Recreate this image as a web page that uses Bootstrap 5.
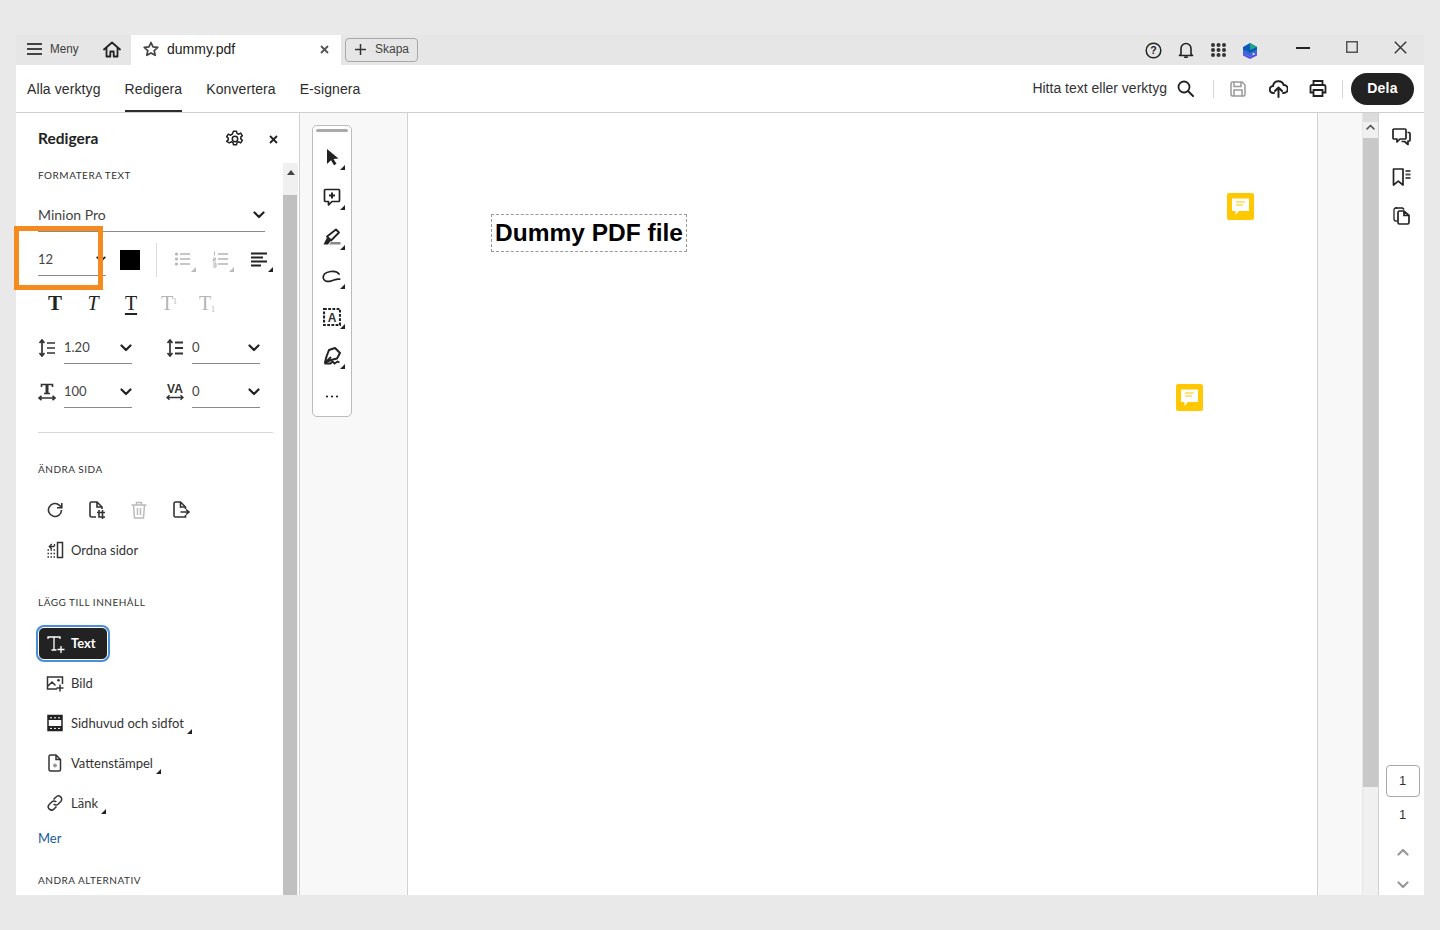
<!DOCTYPE html>
<html lang="sv">
<head>
<meta charset="utf-8">
<title>dummy.pdf</title>
<link href="https://cdn.jsdelivr.net/npm/bootstrap@5.3.0/dist/css/bootstrap.min.css" rel="stylesheet">
<style>
html,body{height:100%;overflow:hidden}
body{background:#e9e9e9;font-family:"Liberation Sans",Arial,sans-serif;color:#2c2c2c;padding:35px 16px}
svg{display:block;flex:none}
.sprite{position:absolute;width:0;height:0}
.app-win{height:860px;background:#fff}
.tabbar{height:30px;background:#e6e6e6;flex:none}
.menu-zone{width:115px;padding:0 0 2px 11px}
.menu-txt{font-size:12px;color:#3c3c3c;margin-left:8px;width:53px;transform:scaleX(.97);transform-origin:left}
.file-tab{width:210px;height:30px;background:#fff;padding:0 12px 2px;font-size:14px}
.file-name{margin-left:8px;color:#222}
.make-btn{width:73px;height:24px;margin:0 0 1px 4px;border:1px solid #a8a8a8;border-radius:4px;font-size:12px;color:#444;padding:0 0 1px 8px;gap:8px;background:#e6e6e6}
.toolbar{height:48px;border-bottom:1px solid #cfcfcf;flex:none;padding:0 10px 0 11px;font-size:14px}
.tool-tab{height:47px;margin-right:24px;color:#2c2c2c;text-decoration:none;display:flex;align-items:center;padding-top:1px;border-bottom:2px solid transparent;border-top:2px solid transparent;letter-spacing:.1px}
.tool-tab.is-on{border-bottom-color:#2c2c2c}
.find-txt{color:#333}
.vsep{width:1px;height:18px;background:#d5d5d5}
.share-btn{width:63px;height:32px;border-radius:16px;background:#222;color:#fff;font-weight:700;font-size:14px;border:0;padding:0;letter-spacing:.2px}
.workspace{flex:1;min-height:0}
.side-panel{width:284px;flex:none;border-right:1px solid #d2d2d2;font-family:Lato,"Noto Sans",sans-serif;color:#2c2c2c}
.side-head{height:50px;padding:2px 21px 0 22px;flex:none}
.side-title{font-size:15.5px;font-weight:700;flex:1;color:#222}
.side-body{flex:1;min-height:0}
.side-scroll{width:15px;flex:none;margin-right:1px;background:#f0f0f0}
.side-arrow{height:32px;padding-top:7px}
.side-thumb{flex:1;background:#c0c0c0;margin-right:1px}
.side-col{flex:1;padding-left:22px;min-width:0;position:relative}
.sect-name{height:24px;font-size:10px;letter-spacing:.5px;color:#333;display:flex;align-items:center;text-transform:uppercase}
.font-pick{height:33px;margin-top:12px;width:227px;border-bottom:1px solid #8a8a8a;font-size:14px;color:#444;padding:0 0 1px}
.size-row{height:44px}
.size-pick{width:68px;height:44px;border-bottom:1px solid #8a8a8a;font-size:13px;color:#444;padding-top:12px}
.swatch{width:20px;height:20px;background:#000;margin-left:14px;margin-top:12px}
.size-sep{width:1px;height:34px;background:#dcdcdc;margin:12px 0 0 16px}
.list-ic{position:relative;width:20px;height:20px;margin-top:12px}
.ic-dim{color:#b4b4b4}
.ic-dark{color:#222}
.tri{position:absolute;width:0;height:0;border-style:solid;border-width:0 0 5px 5px;border-color:transparent transparent #222 transparent;right:-3px;bottom:-2px}
.tri.is-dim{border-bottom-color:#bbb}
.style-row{height:32px;margin-top:11px}
.t-btn{width:38px;text-align:center;font-family:"Liberation Serif",serif;font-size:20px;line-height:32px;color:#222;position:relative;left:-2px}
.t-btn.is-dim{color:#b4b4b4}
.t-btn sup{font-size:8px;top:-.8em;position:relative;vertical-align:baseline}
.t-btn sub{font-size:8px;position:relative;vertical-align:baseline;top:.2em}
.t-bold{font-weight:700;font-size:21px}
.t-ital{font-style:italic}
.t-under{text-decoration:underline;text-underline-offset:3px}
.metric-row{height:32px;margin-bottom:12px}
.metric-row.first{margin-top:13px}
.metric{width:94px;margin-right:34px;height:32px}
.metric-ic{width:26px;flex:none}
.metric-val{width:68px;height:32px;border-bottom:1px solid #8a8a8a;font-size:13px;color:#444}
.side-rule{height:1px;background:#d8d8d8;width:235px;margin-top:24px}
.mt-sect{margin-top:24px}
.page-ics{height:40px;margin-top:9px;padding-left:8px;gap:24px}
.page-ics svg{width:18px;height:18px}
.act-row{height:40px;padding-left:8px;font-size:13px;color:#333;position:relative}
.act-row .act-ic{width:25px;flex:none}
.act-txt{padding-top:1px}
.act-lab{position:relative;padding:1px 3px 0 0}
.act-lab .tri{right:-5px;bottom:-1px}
.add-sect{margin-top:20px}
.text-act{width:70px;height:33px;margin-top:13px;background:#222;color:#fff;border-radius:6px;border:1px solid #fff;font-size:13px;font-weight:700;padding:0 0 0 8px;gap:6px;box-shadow:0 0 0 2px #4a8fd8}
.after-text{margin-top:3px}
.more-link{height:24px;margin-top:3px;font-size:13px;color:#1a5a9e;display:flex;align-items:center;text-decoration:none;padding-top:1px}
.last-sect{margin-top:18px}
.tool-rail{width:108px;flex:none;background:#f8f8f8;border-right:1px solid #d2d2d2;padding:12px 0 0 12px}
.tool-box{width:40px;height:292px;background:#fff;border:1px solid #bcbcbc;border-radius:5px;padding-top:3px}
.tool-handle{width:32px;height:3px;background:#aaa;border-radius:2px;margin:0 auto 5px}
.tool-slot{height:40px;position:relative}
.tool-slot .tri{right:6px;bottom:7px}
.lasso-ic{margin-top:4px}
.frame-ic{margin-top:2px}
.doc-page{flex:1;position:relative;background:#fff;min-width:0}
.doc-title{position:absolute;left:83px;top:101px;width:196px;height:38px;border:1px dashed #999;font-size:24.5px;font-weight:700;color:#000;display:flex;align-items:center;justify-content:center;white-space:nowrap}
.note-mark{position:absolute;width:27px;height:27px;background:#ffc800;border-radius:2px}
.note-a{left:819px;top:80px}
.note-b{left:768px;top:271px}
.doc-gutter{width:61px;flex:none;background:#f8f8f8;border-left:1px solid #d2d2d2;display:flex;justify-content:flex-end}
.doc-scroll{width:16px;background:#f0f0f0;border-left:1px solid #e6e6e6}
.ds-cap{height:9px;background:#dcdcdc}
.ds-arrow{height:16px;padding-top:2px}
.ds-thumb{height:649px;background:#c8c8c8}
.right-rail{width:46px;flex:none;border-left:1px solid #d2d2d2;padding:4px 0 0}
.rail-ic{height:40px;width:100%}
.rail-ic.third{height:38px}
.page-stack{font-size:13px;color:#333;padding-bottom:4px;margin-left:2px}
.page-cur{width:34px;height:32px;border:1px solid #a8a8a8;border-radius:4px;margin-bottom:11px}
.page-all{margin-bottom:27px;line-height:13px}
.chev-up{color:#999}
.chev-lo{margin:25px 0 2px;color:#999}
.hl-box{position:absolute;left:-2px;top:63px;width:89px;height:64px;border:5px solid #f58a1f;pointer-events:none;z-index:5}
.topic-gap-16{margin-left:16px}
</style>
</head>
<body>
<svg class="sprite" aria-hidden="true">
  <symbol id="chev" viewBox="0 0 12 8"><path d="M1.500 1.500 6 6l4.500-4.500" fill="none" stroke="currentColor" stroke-width="2.200" stroke-linecap="round" stroke-linejoin="round"/></symbol>
  <symbol id="chevup" viewBox="0 0 12 8"><path d="M1.500 6.500 6 2l4.500 4.500" fill="none" stroke="currentColor" stroke-width="2.200" stroke-linecap="round" stroke-linejoin="round"/></symbol>
  <symbol id="bullets" viewBox="0 0 20 20"><g stroke="currentColor" stroke-width="1.500" fill="none"><path d="M7 4h10M7 9h10M7 14h10"/></g><g fill="currentColor"><circle cx="3.500" cy="4" r="1.600"/><circle cx="3.500" cy="9" r="1.600"/><circle cx="3.500" cy="14" r="1.600"/></g></symbol>
  <symbol id="numbers" viewBox="0 0 20 20"><g stroke="currentColor" stroke-width="1.500" fill="none"><path d="M7 4h10M7 9h10M7 14h10"/><path d="M3.500 1.500v4M2 8h2.500v1.500H2V11h3M2 13h3v4H2M2 15h3" stroke-width="1"/></g></symbol>
  <symbol id="align" viewBox="0 0 20 20"><path d="M1 3.500h16M1 7.500h12M1 11.500h16M1 15.500h10" stroke="currentColor" stroke-width="2" fill="none"/></symbol>
</svg>

<div class="app-win d-flex flex-column">
  <div class="tabbar d-flex align-items-center">
    <div class="menu-zone d-flex align-items-center">
      <svg width="15" height="14" viewBox="0 0 15 14"><path d="M0 2h15M0 7h15M0 12h15" stroke="#444" stroke-width="2"/></svg>
      <span class="menu-txt">Meny</span>
      <svg width="18" height="17" viewBox="0 0 18 17"><path d="M1 8.500 9 1.500l8 7M3.500 7v8.500h3.800v-5h3.400v5h3.800V7" fill="none" stroke="#222" stroke-width="1.800" stroke-linejoin="round" stroke-linecap="round"/></svg>
    </div>
    <div class="file-tab d-flex align-items-center">
      <svg width="16" height="16" viewBox="0 0 16 16"><path d="M8 1.500l2 4.400 4.800.5-3.600 3.200 1 4.700L8 11.900l-4.200 2.400 1-4.700L1.200 6.400 6 5.900z" fill="none" stroke="#444" stroke-width="1.700" stroke-linejoin="round"/></svg>
      <span class="file-name flex-grow-1">dummy.pdf</span>
      <svg width="9" height="9" viewBox="0 0 9 9"><path d="M1 1l7 7M8 1 1 8" stroke="#555" stroke-width="1.800"/></svg>
    </div>
    <div class="make-btn d-flex align-items-center">
      <svg width="13" height="13" viewBox="0 0 13 13"><path d="M6.500 1v11M1 6.500h11" stroke="#333" stroke-width="1.500"/></svg>
      <span>Skapa</span>
    </div>
    <div class="flex-grow-1"></div>
    <div class="d-flex align-items-center">
      <svg width="17" height="17" viewBox="0 0 17 17"><circle cx="8.500" cy="8.500" r="7.300" fill="none" stroke="#222" stroke-width="1.500"/><text x="8.500" y="12.300" text-anchor="middle" font-size="10.500" font-weight="700" font-family="Liberation Sans" fill="#222">?</text></svg>
      <svg width="16" height="18" viewBox="0 0 16 18" style="margin-left:16px"><path d="M3 13V7.500a5 5 0 0 1 10 0V13l1.500 1.500h-13zM6.200 16.300h3.600" fill="none" stroke="#222" stroke-width="1.600" stroke-linejoin="round"/></svg>
      <svg width="15" height="14" viewBox="0 0 15 14" style="margin-left:17px"><g fill="#333"><circle cx="2" cy="2" r="2"/><circle cx="7.500" cy="2" r="2"/><circle cx="13" cy="2" r="2"/><circle cx="2" cy="7" r="2"/><circle cx="7.500" cy="7" r="2"/><circle cx="13" cy="7" r="2"/><circle cx="2" cy="12" r="2"/><circle cx="7.500" cy="12" r="2"/><circle cx="13" cy="12" r="2"/></g></svg>
      <svg width="16" height="16" viewBox="0 0 16 16" style="margin:2px 0 0 16px"><path d="M1 10l7 3.500 7-3.500v2.500L8 16l-7-3.500z" fill="#5a49e3"/><path d="M1 7l7 3.500L15 7v3L8 13.500 1 10z" fill="#2f62dc"/><path d="M8 0l7 4v3l-7 3.500L1 7V4z" fill="#0d58b8"/><path d="M8 0l7 4-7 3z" fill="#1aa78b"/><circle cx="11.500" cy="11" r="1" fill="#fff"/></svg>
      <svg width="14" height="2" viewBox="0 0 14 2" style="margin:-4px 0 0 38px"><path d="M0 1h14" stroke="#222" stroke-width="2"/></svg>
      <svg width="12" height="12" viewBox="0 0 12 12" style="margin:-6px 0 0 36px"><rect x=".75" y=".75" width="10.500" height="10.500" fill="none" stroke="#555" stroke-width="1.500"/></svg>
      <svg width="13" height="13" viewBox="0 0 13 13" style="margin:-5px 17px 0 36px"><path d="M.8.800l11.400 11.400M12.200.800.800 12.200" stroke="#333" stroke-width="1.400"/></svg>
    </div>
  </div>

  <div class="toolbar d-flex align-items-center">
    <a class="tool-tab" href="#">Alla verktyg</a>
    <a class="tool-tab is-on" href="#">Redigera</a>
    <a class="tool-tab" href="#">Konvertera</a>
    <a class="tool-tab" href="#">E-signera</a>
    <div class="flex-grow-1"></div>
    <span class="find-txt">Hitta text eller verktyg</span>
    <svg width="17" height="17" viewBox="0 0 17 17" style="margin-left:10px"><circle cx="7" cy="7" r="5.500" fill="none" stroke="#222" stroke-width="1.800"/><path d="M11 11l5 5" stroke="#222" stroke-width="2" stroke-linecap="round"/></svg>
    <div class="vsep" style="margin-left:19px"></div>
    <svg width="16" height="16" viewBox="0 0 16 16" style="margin-left:16px"><path d="M1 2.500A1.500 1.500 0 0 1 2.500 1H12l3 3v9.500a1.500 1.500 0 0 1-1.500 1.500h-11A1.500 1.500 0 0 1 1 13.500zM4 1v4.500h7V1M4 15V9h8v6" fill="none" stroke="#999" stroke-width="1.500"/></svg>
    <svg width="19" height="18" viewBox="0 0 19 18" style="margin-left:23px"><path d="M5 13H4.500a3.500 3.500 0 0 1-.5-7A5.500 5.500 0 0 1 14.700 5a4 4 0 0 1 .1 8H14" fill="none" stroke="#222" stroke-width="2" stroke-linecap="round"/><path d="M9.500 17V8M6 11l3.500-3.500L13 11" fill="none" stroke="#222" stroke-width="2" stroke-linecap="round" stroke-linejoin="round"/></svg>
    <svg width="18" height="17" viewBox="0 0 18 17" style="margin-left:21px"><path d="M4.500 5V1h9v4M4.500 12.500H1.500V6.500A1.500 1.500 0 0 1 3 5h12a1.500 1.500 0 0 1 1.500 1.500v6h-3M4.500 10h9v6h-9z" fill="none" stroke="#222" stroke-width="1.800"/></svg>
    <div class="vsep" style="margin-left:15px"></div>
    <button class="share-btn" type="button" style="margin-left:8px">Dela</button>
  </div>

  <div class="workspace d-flex">
    <aside class="side-panel d-flex flex-column">
      <div class="side-head d-flex align-items-center">
        <div class="side-title">Redigera</div>
        <svg width="18" height="18" viewBox="0 0 18 18"><circle cx="9" cy="9" r="2.700" fill="none" stroke="#222" stroke-width="1.500"/><path d="M7.500 1.200h3l.5 2.200 1.700.8 2-1.100 1.600 2.500-1.500 1.500v1.800l1.500 1.500-1.600 2.500-2-1.100-1.700.8-.5 2.200h-3l-.5-2.200-1.700-.8-2 1.100L.7 11.400l1.500-1.500V8.100L.7 6.600l1.600-2.500 2 1.100L6 4.400z" fill="none" stroke="#222" stroke-width="1.500" stroke-linejoin="round"/></svg>
        <svg width="9" height="9" viewBox="0 0 9 9" style="margin-left:25px"><path d="M1 1l7 7M8 1 1 8" stroke="#222" stroke-width="1.800"/></svg>
      </div>
      <div class="side-body d-flex">
        <div class="side-col">
          <div class="sect-name">Formatera text</div>
          <div class="font-pick d-flex align-items-center justify-content-between">
            <span>Minion Pro</span>
            <svg width="12" height="8" class="ic-dark"><use href="#chev"/></svg>
          </div>
          <div class="size-row d-flex align-items-center">
            <div class="size-pick d-flex align-items-center justify-content-between">
              <span>12</span>
              <svg width="10" height="7" class="ic-dark"><use href="#chev"/></svg>
            </div>
            <div class="swatch"></div>
            <div class="size-sep"></div>
            <div class="list-ic topic-gap-16 ic-dim"><svg width="20" height="20"><use href="#bullets"/></svg><i class="tri is-dim"></i></div>
            <div class="list-ic ic-dim" style="margin-left:18px"><svg width="20" height="20"><use href="#numbers"/></svg><i class="tri is-dim"></i></div>
            <div class="list-ic ic-dark" style="margin-left:19px"><svg width="20" height="20"><use href="#align"/></svg><i class="tri"></i></div>
          </div>
          <div class="style-row d-flex">
            <div class="t-btn t-bold">T</div>
            <div class="t-btn t-ital">T</div>
            <div class="t-btn t-under">T</div>
            <div class="t-btn is-dim">T<sup>1</sup></div>
            <div class="t-btn is-dim">T<sub>1</sub></div>
          </div>
          <div class="metric-row first d-flex">
            <div class="metric d-flex align-items-center">
              <div class="metric-ic"><svg width="18" height="18" viewBox="0 0 18 18"><path d="M4 1v16M1.500 4 4 1l2.500 3M1.500 14 4 17l2.500-3M9 4h8M9 9h8M9 14h8" fill="none" stroke="#333" stroke-width="1.700"/></svg></div>
              <div class="metric-val d-flex align-items-center justify-content-between"><span>1.20</span><svg width="12" height="8" class="ic-dark"><use href="#chev"/></svg></div>
            </div>
            <div class="metric d-flex align-items-center">
              <div class="metric-ic"><svg width="18" height="18" viewBox="0 0 18 18"><path d="M4 1v16M1.500 4 4 1l2.500 3M1.500 14 4 17l2.500-3" fill="none" stroke="#333" stroke-width="1.700"/><path d="M9 3.500h8M9 9h8M9 14.500h8" fill="none" stroke="#333" stroke-width="2.200"/></svg></div>
              <div class="metric-val d-flex align-items-center justify-content-between"><span>0</span><svg width="12" height="8" class="ic-dark"><use href="#chev"/></svg></div>
            </div>
          </div>
          <div class="metric-row d-flex">
            <div class="metric d-flex align-items-center">
              <div class="metric-ic"><svg width="18" height="18" viewBox="0 0 18 18"><path d="M3.500 4V1.500h11V4M6 10.500h6M1 15h16M3.500 12.800 1 15l2.500 2.200M14.500 12.800 17 15l-2.500 2.200" fill="none" stroke="#333" stroke-width="1.600"/><path d="M9 1.500v9" stroke="#333" stroke-width="3"/></svg></div>
              <div class="metric-val d-flex align-items-center justify-content-between"><span>100</span><svg width="12" height="8" class="ic-dark"><use href="#chev"/></svg></div>
            </div>
            <div class="metric d-flex align-items-center">
              <div class="metric-ic"><svg width="18" height="18" viewBox="0 0 18 18"><text x="9" y="9.500" text-anchor="middle" font-size="12" font-weight="700" font-family="Liberation Sans" fill="#333">VA</text><path d="M1 14.500h16M3.500 12.300 1 14.500l2.500 2.200M14.500 12.300 17 14.500l-2.500 2.200" fill="none" stroke="#333" stroke-width="1.500"/></svg></div>
              <div class="metric-val d-flex align-items-center justify-content-between"><span>0</span><svg width="12" height="8" class="ic-dark"><use href="#chev"/></svg></div>
            </div>
          </div>
          <div class="side-rule"></div>
          <div class="sect-name mt-sect">Ändra sida</div>
          <div class="page-ics d-flex align-items-center">
            <svg viewBox="0 0 18 18"><path d="M15.500 9a6.500 6.500 0 1 1-2-4.700L15.500 6.500M15.800 2v4.800H11" fill="none" stroke="#333" stroke-width="1.600"/></svg>
            <svg viewBox="0 0 18 18"><path d="M8 16H3.500A1.500 1.500 0 0 1 2 14.500v-12A1.500 1.500 0 0 1 3.500 1H9l5 5v2M9 1v5h5M9 11.500h8M11 9v7h6M14.500 9v9" fill="none" stroke="#333" stroke-width="1.600"/></svg>
            <svg viewBox="0 0 18 18"><path d="M1.500 4h15M6.500 4V1.500h5V4M3.500 4l1 13h9l1-13M7.500 7v7M10.500 7v7" fill="none" stroke="#bbb" stroke-width="1.500"/></svg>
            <svg viewBox="0 0 18 18"><path d="M13.500 8V6l-5-5H3.500A1.500 1.500 0 0 0 2 2.500v12A1.500 1.500 0 0 0 3.500 16H13.500v-2M8.500 1v5h5M8.500 11h8.500M14 8.500l3 2.500-3 2.500" fill="none" stroke="#333" stroke-width="1.600"/></svg>
          </div>
          <div class="act-row d-flex align-items-center">
            <div class="act-ic"><svg width="18" height="18" viewBox="0 0 18 18"><path d="M11.500 1.500h5v15h-5z" fill="none" stroke="#333" stroke-width="1.500"/><path d="M8 5.500H3.500M5.800 3 3.300 5.500 5.800 8M8.500 3v2.500" fill="none" stroke="#333" stroke-width="1.300"/><path d="M1.500 9h7.500M1.500 12.500h7.500M1.500 16h7.500" fill="none" stroke="#333" stroke-width="1.500" stroke-dasharray="1.500 1.500"/></svg></div>
            <span class="act-txt">Ordna sidor</span>
          </div>
          <div class="sect-name add-sect">Lägg till innehåll</div>
          <div class="text-act d-flex align-items-center">
            <svg width="18" height="18" viewBox="0 0 18 18"><path d="M1 4V2h12v2M7 2v13M4.500 15h5M10.500 14.500h7M14 11v7" fill="none" stroke="#fff" stroke-width="1.300"/></svg>
            <span>Text</span>
          </div>
          <div class="act-row d-flex align-items-center after-text">
            <div class="act-ic"><svg width="18" height="18" viewBox="0 0 18 18"><path d="M11 15H1.500V3h15v7M1.500 12.500 6 8l3.500 3.500M10.500 14h7M14 10.500v7" fill="none" stroke="#333" stroke-width="1.500"/><circle cx="12.500" cy="6.300" r="1.300" fill="#333"/></svg></div>
            <span class="act-txt">Bild</span>
          </div>
          <div class="act-row d-flex align-items-center">
            <div class="act-ic"><svg width="18" height="18" viewBox="0 0 18 18"><rect x="2" y="1.500" width="14" height="15" fill="none" stroke="#222" stroke-width="1.500"/><path d="M2 2h14v4H2zM2 12h14v4.500H2z" fill="#222"/><path d="M4 3.800h2M8 3.800h2M12 3.800h2M4 14.400h2M8 14.400h2M12 14.400h2" stroke="#fff" stroke-width="1"/></svg></div>
            <span class="act-lab">Sidhuvud och sidfot<i class="tri"></i></span>
          </div>
          <div class="act-row d-flex align-items-center">
            <div class="act-ic"><svg width="18" height="18" viewBox="0 0 18 18"><path d="M3 2.500A1.500 1.500 0 0 1 4.500 1H10l4.500 4.500v10A1.500 1.500 0 0 1 13 17H4.500A1.500 1.500 0 0 1 3 15.500zM10 1v4.500h4.500" fill="none" stroke="#333" stroke-width="1.500"/><circle cx="9" cy="11.500" r="2" fill="#999"/></svg></div>
            <span class="act-lab">Vattenstämpel<i class="tri"></i></span>
          </div>
          <div class="act-row d-flex align-items-center">
            <div class="act-ic"><svg width="18" height="18" viewBox="0 0 18 18"><path d="M7.500 5.500 10 3a3.200 3.200 0 0 1 4.800 4.500l-2.800 2.800a3 3 0 0 1-4.300-.3M10.500 12.500 8 15a3.200 3.200 0 0 1-4.800-4.500L6 7.700a3 3 0 0 1 4.300.3" fill="none" stroke="#333" stroke-width="1.500"/></svg></div>
            <span class="act-lab">Länk<i class="tri"></i></span>
          </div>
          <a class="more-link" href="#">Mer</a>
          <div class="sect-name last-sect">Andra alternativ</div>
          <div class="hl-box"></div>
        </div>
        <div class="side-scroll d-flex flex-column">
          <div class="side-arrow d-flex justify-content-center"><svg width="8" height="5" viewBox="0 0 8 5"><path d="M4 0l4 5H0z" fill="#444"/></svg></div>
          <div class="side-thumb"></div>
        </div>
      </div>
    </aside>

    <div class="tool-rail">
      <div class="tool-box d-flex flex-column">
        <div class="tool-handle"></div>
        <div class="tool-slot d-flex align-items-center justify-content-center"><svg width="18" height="18" viewBox="0 0 18 18"><path d="M4 1v15l4-3.800 3 5 2.500-1.400-3-4.800 5-.6z" fill="#222"/></svg><i class="tri"></i></div>
        <div class="tool-slot d-flex align-items-center justify-content-center"><svg width="18" height="18" viewBox="0 0 18 18"><path d="M2.500 1.500h13a1 1 0 0 1 1 1v10a1 1 0 0 1-1 1H9L5.500 17v-3.500h-3a1 1 0 0 1-1-1v-10a1 1 0 0 1 1-1z" fill="none" stroke="#222" stroke-width="1.700" stroke-linejoin="round"/><path d="M9 4.500v6M6 7.500h6" stroke="#222" stroke-width="2"/></svg><i class="tri"></i></div>
        <div class="tool-slot d-flex align-items-center justify-content-center"><svg width="18" height="18" viewBox="0 0 18 18"><path d="M13 1.500l3 3-8 8-4-4z" fill="none" stroke="#222" stroke-width="1.800" stroke-linejoin="round"/><path d="M8 14h9.500v2.500H6z" fill="#888"/><path d="M4 9.500l3.500 3.500L5 16.500H.5z" fill="#222"/></svg><i class="tri"></i></div>
        <div class="tool-slot d-flex align-items-center justify-content-center"><svg class="lasso-ic" width="20" height="16" viewBox="0 0 20 16"><path d="M17 4C15.500 1.800 12 1 8.500 1.500 4 2.200 1 4.700 1.200 7.800c.2 3 3.700 4.200 7.500 3.300 2.800-.7 5.500-2.500 9-2" fill="none" stroke="#222" stroke-width="1.700" stroke-linecap="round"/></svg><i class="tri"></i></div>
        <div class="tool-slot d-flex align-items-center justify-content-center"><svg class="frame-ic" width="18" height="18" viewBox="0 0 18 18"><rect x="1" y="1" width="16" height="16" fill="none" stroke="#222" stroke-width="2.200" stroke-dasharray="2.800 1.400"/><text x="9" y="13.500" text-anchor="middle" font-size="12" font-weight="700" font-family="Liberation Sans" fill="#333">A</text></svg><i class="tri"></i></div>
        <div class="tool-slot d-flex align-items-center justify-content-center"><svg width="19" height="18" viewBox="0 0 19 18"><path d="M6 3l6-2 5 5-3 5.500-6 1.500L2 15.500l1.500-6z" fill="none" stroke="#222" stroke-width="2" stroke-linejoin="round"/><path d="M2 16l6-6M1.500 16.500h6l2-2 2 2 3-2 2 1" fill="none" stroke="#222" stroke-width="1.800"/></svg><i class="tri"></i></div>
        <div class="tool-slot d-flex align-items-center justify-content-center"><svg width="14" height="3" viewBox="0 0 14 3"><g fill="#222"><circle cx="2" cy="1.500" r="1.100"/><circle cx="7" cy="1.500" r="1.100"/><circle cx="12" cy="1.500" r="1.100"/></g></svg></div>
      </div>
    </div>

    <main class="doc-page">
      <div class="doc-title">Dummy PDF file</div>
      <div class="note-mark note-a d-flex align-items-center justify-content-center"><svg width="19" height="19" viewBox="0 0 19 19"><path d="M1 1.500h17v12.500H8l-3.500 4v-4H1z" fill="#fff"/><path d="M5 5h9M5 8h7" stroke="#ffc800" stroke-width="1.200"/></svg></div>
      <div class="note-mark note-b d-flex align-items-center justify-content-center"><svg width="19" height="19" viewBox="0 0 19 19"><path d="M1 1.500h17v12.500H8l-3.500 4v-4H1z" fill="#fff"/><path d="M5 5h9M5 8h7" stroke="#ffc800" stroke-width="1.200"/></svg></div>
    </main>

    <div class="doc-gutter">
      <div class="doc-scroll d-flex flex-column">
        <div class="ds-cap"></div>
        <div class="ds-arrow d-flex justify-content-center"><svg width="9" height="6" style="color:#555"><use href="#chevup"/></svg></div>
        <div class="ds-thumb"></div>
      </div>
    </div>

    <div class="right-rail d-flex flex-column align-items-center">
      <div class="rail-ic d-flex align-items-center justify-content-center"><svg width="19" height="18" viewBox="0 0 19 18"><path d="M2 1h11a1 1 0 0 1 1 1v8a1 1 0 0 1-1 1H8l-3 3v-3H2a1 1 0 0 1-1-1V2a1 1 0 0 1 1-1z" fill="none" stroke="#222" stroke-width="1.700" stroke-linejoin="round"/><path d="M15.500 4.500h1.500a1 1 0 0 1 1 1V12a1 1 0 0 1-1 1h-1V16.500L12.500 13.500h-3" fill="none" stroke="#222" stroke-width="1.700" stroke-linejoin="round"/></svg></div>
      <div class="rail-ic d-flex align-items-center justify-content-center"><svg width="19" height="18" viewBox="0 0 19 18"><path d="M1.500 1h9.500v16l-4.700-3.800L1.500 17z" fill="none" stroke="#222" stroke-width="1.700" stroke-linejoin="round"/><path d="M13.500 3h5M13.500 6.500h5M13.500 10h5" stroke="#555" stroke-width="1.800"/></svg></div>
      <div class="rail-ic third d-flex align-items-center justify-content-center"><svg width="17" height="18" viewBox="0 0 17 18"><path d="M4.500 1H3A2 2 0 0 0 1 3v9a2 2 0 0 0 2 2h1" fill="none" stroke="#333" stroke-width="1.400"/><path d="M2 1h7.500l1.500 1.500M5 5.500A1.500 1.500 0 0 1 6.500 4H11l5 4.500V15.500A1.500 1.500 0 0 1 14.500 17h-8A1.500 1.500 0 0 1 5 15.500zM11 4v4.500h5" fill="none" stroke="#222" stroke-width="1.700"/></svg></div>
      <div class="flex-grow-1"></div>
      <div class="page-stack d-flex flex-column align-items-center">
        <div class="page-cur d-flex align-items-center justify-content-center">1</div>
        <div class="page-all">1</div>
        <svg width="12" height="8" class="chev-up"><use href="#chevup"/></svg>
        <svg width="12" height="8" class="chev-lo"><use href="#chev"/></svg>
      </div>
    </div>
  </div>
</div>
</body>
</html>
